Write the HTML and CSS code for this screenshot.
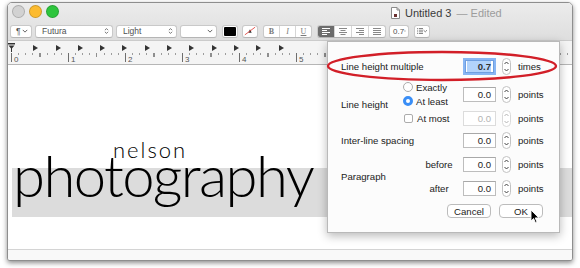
FILE: index.html
```html
<!DOCTYPE html>
<html lang="en">
<head>
    <meta charset="UTF-8">
    <meta name="viewport" content="width=device-width, initial-scale=1.0">
    <title>Untitled 3 — Edited</title>
    <link rel="stylesheet" href="styles.css">
</head>
<body>
    <div class="window">
        <div class="chrome">
            <div class="titlebar">
                <div class="lights">
                    <span class="light close"></span>
                    <span class="light minimize"></span>
                    <span class="light zoom"></span>
                </div>
                <div class="title">
                    <svg class="doc-icon" width="9" height="12" viewBox="0 0 9 12"><path d="M0.5 0.5h5.5l2.5 2.5v8.5h-8z" fill="#fff" stroke="#8a8a8a"/><path d="M6 0.5v2.5h2.5" fill="none" stroke="#8a8a8a"/><rect x="3" y="7" width="3" height="3" fill="#6b3030"/></svg>
                    <span class="doc-name">Untitled 3</span>
                    <span class="doc-state">— Edited</span>
                </div>
            </div>

            <div class="formatbar">
                <div class="ctl para">¶ <svg width="6" height="4" viewBox="0 0 8 5"><path d="M1 1L4 4L7 1" fill="none" stroke="#555" stroke-width="1.2"/></svg></div>
                <div class="ctl popup font-family">Futura <svg class="updown" width="5" height="8" viewBox="0 0 6 10"><path d="M1 4L3 2L5 4M1 6L3 8L5 6" fill="none" stroke="#555"/></svg></div>
                <div class="ctl popup font-weight">Light <svg class="updown" width="5" height="8" viewBox="0 0 6 10"><path d="M1 4L3 2L5 4M1 6L3 8L5 6" fill="none" stroke="#555"/></svg></div>
                <div class="ctl popup font-size"><svg width="6" height="4" viewBox="0 0 8 5"><path d="M1 1L4 4L7 1" fill="none" stroke="#555" stroke-width="1.2"/></svg></div>
                <div class="ctl well gap"><span class="swatch"></span></div>
                <div class="ctl well"><svg width="14" height="10" viewBox="0 0 14 10"><path d="M5 7l2-4 2 4z" fill="#333"/><path d="M1 9.5L13 0.5" stroke="#e0403a" stroke-width="1"/></svg></div>
                <div class="segmented style gap">
                    <span class="seg bold">B</span>
                    <span class="seg italic">I</span>
                    <span class="seg underline">U</span>
                </div>
                <div class="segmented align gap">
                    <span class="seg on"><svg width="8" height="7" viewBox="0 0 8 7"><path d="M0 .5h8M0 2.5h5M0 4.5h8M0 6.5h5" stroke="#fff"/></svg></span>
                    <span class="seg"><svg width="8" height="7" viewBox="0 0 8 7"><path d="M0 .5h8M1.5 2.5h5M0 4.5h8M1.5 6.5h5" stroke="#888"/></svg></span>
                    <span class="seg"><svg width="8" height="7" viewBox="0 0 8 7"><path d="M0 .5h8M3 2.5h5M0 4.5h8M3 6.5h5" stroke="#888"/></svg></span>
                    <span class="seg"><svg width="8" height="7" viewBox="0 0 8 7"><path d="M0 .5h8M0 2.5h8M0 4.5h8M0 6.5h8" stroke="#888"/></svg></span>
                </div>
                <div class="ctl popup spacing">0.7 <svg class="updown" width="5" height="8" viewBox="0 0 6 10"><path d="M1 4L3 2L5 4M1 6L3 8L5 6" fill="none" stroke="#555"/></svg></div>
                <div class="ctl list gap"><svg width="7" height="6" viewBox="0 0 7 6"><path d="M0 .5h1M2 .5h5M0 3h1M2 3h5M0 5.5h1M2 5.5h5" stroke="#555"/></svg><svg width="5" height="4" viewBox="0 0 8 5"><path d="M1 1L4 4L7 1" fill="none" stroke="#555" stroke-width="1.3"/></svg></div>
            </div>
        </div>

        <div class="ruler">
            <div class="markers">
                <span class="stop"><svg class="indent" width="7" height="9" viewBox="0 0 7 9"><path d="M0 0h7v1.5h-7z M0.5 2.5h6L3.5 6z" fill="#333"/><path d="M3.5 5v4" stroke="#333"/></svg></span>
                <span class="stop"><span class="tab"></span></span>
                <span class="stop"><span class="tab"></span></span>
                <span class="stop"><span class="tab"></span></span>
                <span class="stop"><span class="tab"></span></span>
                <span class="stop"><span class="tab"></span></span>
                <span class="stop"><span class="tab"></span></span>
                <span class="stop"><span class="tab"></span></span>
                <span class="stop"><span class="tab"></span></span>
                <span class="stop"><span class="tab"></span></span>
                <span class="stop"><span class="tab"></span></span>
                <span class="stop"><span class="tab"></span></span>
                <span class="stop"><span class="tab"></span></span>
            </div>
            <div class="scale">
                <span class="inch">0</span>
                <span class="inch">1</span>
                <span class="inch">2</span>
                <span class="inch">3</span>
                <span class="inch">4</span>
                <span class="inch">5</span>
            </div>
        </div>

        <div class="doc">
            <p class="nelson">nelson</p>
            <p class="photography">photography</p>
        </div>

        <div class="bottombar"></div>

        <div class="spacing-panel">
            <div class="panel-grid">
                <span class="label wide">Line height multiple</span>
                <span class="field focused"><span class="selected">0.7</span></span>
                <svg class="stepper" width="9" height="17" viewBox="0 0 9 17"><rect x="0.5" y="0.5" width="8" height="16" rx="4" fill="#fff" stroke="#c2c2c2"/><path d="M2.5 6L4.5 4L6.5 6M2.5 11L4.5 13L6.5 11" fill="none" stroke="#444"/></svg>
                <span class="unit">times</span>

                <span class="label tall">Line height</span>
                <div class="choices">
                    <span class="choice"><span class="radio"></span>Exactly</span>
                    <span class="choice"><span class="radio on"></span>At least</span>
                </div>
                <span class="field">0.0</span>
                <svg class="stepper" width="9" height="17" viewBox="0 0 9 17"><rect x="0.5" y="0.5" width="8" height="16" rx="4" fill="#fff" stroke="#c2c2c2"/><path d="M2.5 6L4.5 4L6.5 6M2.5 11L4.5 13L6.5 11" fill="none" stroke="#444"/></svg>
                <span class="unit">points</span>

                <span class="choice"><span class="check"></span>At most</span>
                <span class="field disabled">0.0</span>
                <svg class="stepper" width="9" height="17" viewBox="0 0 9 17"><rect x="0.5" y="0.5" width="8" height="16" rx="4" fill="#fff" stroke="#dadada"/><path d="M2.5 6L4.5 4L6.5 6M2.5 11L4.5 13L6.5 11" fill="none" stroke="#b5b5b5"/></svg>
                <span class="unit">points</span>

                <span class="label wide">Inter-line spacing</span>
                <span class="field">0.0</span>
                <svg class="stepper" width="9" height="17" viewBox="0 0 9 17"><rect x="0.5" y="0.5" width="8" height="16" rx="4" fill="#fff" stroke="#c2c2c2"/><path d="M2.5 6L4.5 4L6.5 6M2.5 11L4.5 13L6.5 11" fill="none" stroke="#444"/></svg>
                <span class="unit">points</span>

                <span class="label tall">Paragraph</span>
                <span class="sub">before</span>
                <span class="field">0.0</span>
                <svg class="stepper" width="9" height="17" viewBox="0 0 9 17"><rect x="0.5" y="0.5" width="8" height="16" rx="4" fill="#fff" stroke="#c2c2c2"/><path d="M2.5 6L4.5 4L6.5 6M2.5 11L4.5 13L6.5 11" fill="none" stroke="#444"/></svg>
                <span class="unit">points</span>

                <span class="sub">after</span>
                <span class="field">0.0</span>
                <svg class="stepper" width="9" height="17" viewBox="0 0 9 17"><rect x="0.5" y="0.5" width="8" height="16" rx="4" fill="#fff" stroke="#c2c2c2"/><path d="M2.5 6L4.5 4L6.5 6M2.5 11L4.5 13L6.5 11" fill="none" stroke="#444"/></svg>
                <span class="unit">points</span>

                <div class="actions">
                    <button class="btn">Cancel</button>
                    <button class="btn">OK</button>
                </div>
            </div>
        </div>
    </div>

    <!-- annotation drawn over the screenshot -->
    <svg class="callout" width="240" height="36" viewBox="0 0 240 36"><ellipse cx="117" cy="17" rx="114" ry="14" fill="none" stroke="#d21f28" stroke-width="2.4"/></svg>
    <svg class="cursor" width="10" height="15" viewBox="0 0 10 15"><path d="M1 1v11l2.6-2.5 1.8 4.2 1.6-.7-1.8-4.1h3.6z" fill="#000" stroke="#fff" stroke-width="0.9"/></svg>
</body>
</html>
```

FILE: styles.css
```css
body {
    margin: 0;
    padding: 2px 0 0 7px;
    width: 580px;
    height: 268px;
    box-sizing: border-box;
    overflow: hidden;
    background: #fff;
    position: relative;
    font-family: "Liberation Sans", Arial, sans-serif;
    color: #222;
}
.window {
    position: relative;
    width: 566px;
    height: 259px;
    box-sizing: border-box;
    border: 1px solid #8e8e8e;
    border-radius: 5px 5px 3px 3px;
    box-shadow: 0 2px 5px rgba(0, 0, 0, 0.45);
    background: #fff;
    display: flex;
    flex-direction: column;
    overflow: hidden;
}
.chrome {
    background: linear-gradient(#ececec, #dedede);
}
.titlebar {
    height: 19px;
    display: flex;
    align-items: center;
}
.lights {
    display: flex;
    gap: 4px;
    padding-left: 4px;
    margin-top: -3px;
}
.light {
    width: 11px;
    height: 11px;
    border-radius: 50%;
    border: 0.5px solid rgba(0, 0, 0, 0.18);
}
.light.close { background: #d2d2d2; }
.light.minimize { background: #fcbb2f; }
.light.zoom { background: #2ec53d; }
.title {
    margin-left: 332px;
    display: flex;
    align-items: center;
    gap: 5px;
    font-size: 11px;
}
.doc-name { color: #3a3a3a; }
.doc-state { color: #9c9c9c; }

/* format bar */
.formatbar {
    height: 18px;
    display: flex;
    align-items: center;
    gap: 3px;
    padding-left: 2px;
}
.ctl, .segmented {
    height: 13px;
    box-sizing: border-box;
    border: 1px solid #c9c9c9;
    border-bottom-color: #b5b5b5;
    border-radius: 3px;
    background: #fff;
    display: flex;
    align-items: center;
    font-size: 8.5px;
    color: #505050;
}
.gap { margin-left: 2px; }
.para {
    width: 22px;
    padding: 0 3px 0 5px;
    justify-content: space-between;
}
.popup {
    justify-content: space-between;
    padding: 0 3px 0 6px;
}
.font-family { width: 78px; }
.font-weight { width: 61px; }
.font-size { width: 37px; justify-content: flex-end; }
.spacing { width: 20px; padding: 0 2px 0 3px; font-size: 8px; }
.well {
    width: 16px;
    padding: 1px;
    justify-content: center;
}
.swatch {
    width: 100%;
    height: 100%;
    background: #000;
    border-radius: 1px;
}
.well + .well { margin-left: 1px; }
.segmented { overflow: hidden; }
.seg {
    height: 100%;
    display: flex;
    align-items: center;
    justify-content: center;
    border-left: 1px solid #d6d6d6;
}
.seg:first-child { border-left: none; }
.style .seg {
    width: 15px;
    font-family: "Liberation Serif", serif;
    font-size: 8px;
    color: #7a7a7a;
}
.bold { font-weight: bold; }
.italic { font-style: italic; }
.underline { text-decoration: underline; }
.align .seg { width: 16px; }
.align .seg.on { background: #6c6c6c; }
.list {
    width: 16px;
    padding: 0 1px 0 2px;
    justify-content: space-between;
}

/* ruler */
.ruler {
    height: 25px;
    box-sizing: border-box;
    background: #f4f4f4;
    border-top: 1px solid #cbcbcb;
    border-bottom: 1px solid #b6b6b6;
    padding-left: 3px;
}
.markers {
    height: 11px;
    display: flex;
    align-items: flex-end;
}
.stop {
    flex: 0 0 22.3px;
    height: 9px;
    display: flex;
    align-items: flex-start;
}
.indent { margin-left: -3px; }
.tab {
    margin-top: 2px;
    width: 0;
    height: 0;
    border-left: 5px solid #333;
    border-top: 3px solid transparent;
    border-bottom: 3px solid transparent;
}
.scale {
    height: 12px;
    display: flex;
    background:
        repeating-linear-gradient(90deg, #6e6e6e 0 1px, transparent 1px 57px) 0 1px / 100% 9px no-repeat,
        repeating-linear-gradient(90deg, #8e8e8e 0 1px, transparent 1px 28.5px) 0 1px / 100% 4px no-repeat,
        repeating-linear-gradient(90deg, #9c9c9c 0 1px, transparent 1px 7.125px) 0 1px / 100% 2px no-repeat;
}
.inch {
    flex: 0 0 57px;
    padding: 4px 0 0 3px;
    box-sizing: border-box;
    font-size: 8px;
    line-height: 8px;
    color: #555;
}

/* document */
.doc {
    flex: 1;
    overflow: hidden;
    font-family: Lato, "Open Sans", sans-serif;
    font-weight: 300;
    color: #000;
}
.doc p { margin: 0; }
.nelson {
    margin: 75px 0 0 105px !important;
    font-size: 22px;
    line-height: 20px;
    letter-spacing: 2px;
}
.photography {
    margin: 8px 0 0 4px !important;
    height: 49px;
    box-sizing: border-box;
    padding: 0 0 36px 1px;
    background: #dcdcdc;
    font-size: 58px;
    line-height: 13px;
    letter-spacing: -1.6px;
}
.bottombar {
    height: 10px;
    border-top: 1px solid #d4d4d4;
    background: #f9f9f9;
}

/* line and paragraph spacing panel */
.spacing-panel {
    position: absolute;
    left: 319px;
    top: 38px;
    width: 233px;
    height: 192px;
    box-sizing: border-box;
    background: #fcfcfc;
    border: 1px solid #b9b9b9;
    box-shadow: 0 3px 9px rgba(0, 0, 0, 0.28);
    padding: 10px 0 0 13px;
    font-size: 9.6px;
    color: #222;
}
.panel-grid {
    display: grid;
    grid-template-columns: 62px 60px 33px 21px 26px;
    grid-template-rows: 28px 28px 20px 24px 24px 24px auto;
    align-items: center;
}
.label.wide { grid-column: span 2; }
.label.tall { grid-row: span 2; }
.choices {
    display: flex;
    flex-direction: column;
    gap: 3px;
}
.choice {
    display: flex;
    align-items: center;
    gap: 3px;
}
.radio {
    width: 10px;
    height: 10px;
    box-sizing: border-box;
    border-radius: 50%;
    border: 1px solid #acacac;
    background: #fff;
}
.radio.on {
    border: 3px solid #3a8ef6;
    background: #fff;
}
.check {
    width: 9px;
    height: 9px;
    box-sizing: border-box;
    border-radius: 2px;
    border: 1px solid #acacac;
    background: #fff;
    margin: 0 1px 0 1px;
}
.field {
    height: 15px;
    box-sizing: border-box;
    border: 1px solid #bdbdbd;
    border-top-color: #a8a8a8;
    background: #fff;
    text-align: right;
    padding-right: 4px;
    line-height: 13px;
}
.field.disabled {
    color: #b3b3b3;
    border-color: #dcdcdc;
}
.field.focused {
    width: 29px;
    height: 13px;
    justify-self: center;
    line-height: 11px;
    padding-right: 2px;
    box-shadow: 0 0 0 2px #88b6f4;
    border-color: #6f9fe0;
}
.selected {
    display: inline-block;
    width: 24px;
    background: #b2d3fb;
    font-weight: bold;
    color: #333;
}
.stepper { justify-self: center; }
.unit { padding-left: 1px; }
.sub {
    justify-self: end;
    width: 36px;
    margin-right: 6px;
    text-align: center;
}
.actions {
    grid-column: 1 / -1;
    display: flex;
    justify-content: flex-end;
    gap: 8px;
    margin-top: 4px;
}
.btn {
    width: 44px;
    height: 14px;
    padding: 0;
    border: 1px solid #bcbcbc;
    border-radius: 4px;
    background: #fff;
    font-family: "Liberation Sans", Arial, sans-serif;
    font-size: 9.6px;
    color: #222;
}

/* overlays */
.callout {
    position: absolute;
    left: 325px;
    top: 49px;
}
.cursor {
    position: absolute;
    left: 530px;
    top: 209px;
}
```
